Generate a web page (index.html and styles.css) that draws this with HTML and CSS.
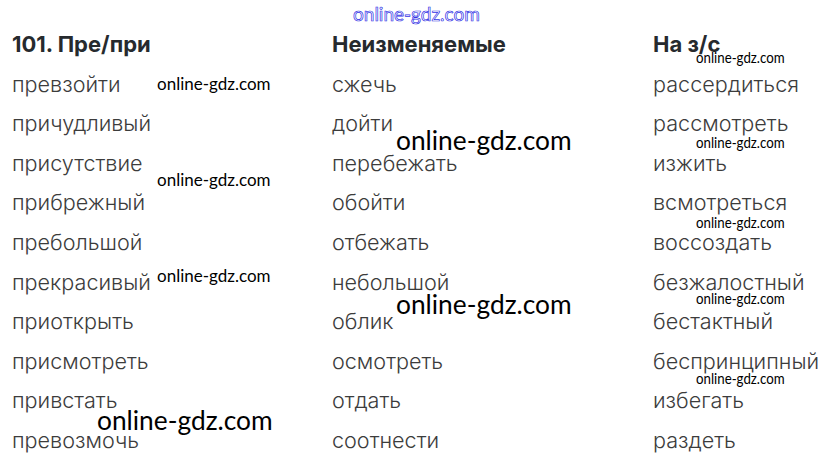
FILE: index.html
```html
<!DOCTYPE html>
<html lang="ru">
<head>
<meta charset="utf-8">
<link rel="stylesheet" href="styles.css">
</head>
<body>
<div class="page">
  <div class="table">
    <div class="col">
      <div class="cell head">101. Пре/при</div>
      <div class="cell">превзойти</div>
      <div class="cell">причудливый</div>
      <div class="cell">присутствие</div>
      <div class="cell">прибрежный</div>
      <div class="cell">пребольшой</div>
      <div class="cell">прекрасивый</div>
      <div class="cell">приоткрыть</div>
      <div class="cell">присмотреть</div>
      <div class="cell">привстать</div>
      <div class="cell">превозмочь</div>
    </div>
    <div class="col">
      <div class="cell head">Неизменяемые</div>
      <div class="cell">сжечь</div>
      <div class="cell">дойти</div>
      <div class="cell">перебежать</div>
      <div class="cell">обойти</div>
      <div class="cell">отбежать</div>
      <div class="cell">небольшой</div>
      <div class="cell">облик</div>
      <div class="cell">осмотреть</div>
      <div class="cell">отдать</div>
      <div class="cell">соотнести</div>
    </div>
    <div class="col">
      <div class="cell head">На з/с</div>
      <div class="cell">рассердиться</div>
      <div class="cell">рассмотреть</div>
      <div class="cell">изжить</div>
      <div class="cell">всмотреться</div>
      <div class="cell">воссоздать</div>
      <div class="cell">безжалостный</div>
      <div class="cell">бестактный</div>
      <div class="cell">беспринципный</div>
      <div class="cell">избегать</div>
      <div class="cell">раздеть</div>
    </div>
  </div>
  <div class="wm wm-top" style="left:353px;top:1px">online-gdz.com</div>
  <div class="wm wm-s" style="left:157px;top:72px">online-gdz.com</div>
  <div class="wm wm-s" style="left:157px;top:168px">online-gdz.com</div>
  <div class="wm wm-s" style="left:157px;top:264px">online-gdz.com</div>
  <div class="wm wm-l" style="left:396px;top:122px">online-gdz.com</div>
  <div class="wm wm-l" style="left:396px;top:286px">online-gdz.com</div>
  <div class="wm wm-l" style="left:97px;top:402px">online-gdz.com</div>
  <div class="wm wm-c" style="left:696px;top:46px">online-gdz.com</div>
  <div class="wm wm-c" style="left:696px;top:131px">online-gdz.com</div>
  <div class="wm wm-c" style="left:696px;top:211px">online-gdz.com</div>
  <div class="wm wm-c" style="left:696px;top:287px">online-gdz.com</div>
  <div class="wm wm-c" style="left:696px;top:367px">online-gdz.com</div>
</div>
</body>
</html>
```
FILE: styles.css
```css
html, body {
  margin: 0;
  padding: 0;
  background: #fff;
}
.page {
  position: relative;
  width: 826px;
  height: 469px;
  overflow: hidden;
}
.table {
  display: grid;
  grid-template-columns: 320px 321px 185px;
  padding: 25px 0 0 12px;
}
.col {
  display: flex;
  flex-direction: column;
}
.cell {
  height: 39.6px;
  line-height: 39.6px;
  font-family: "Inter", "Liberation Sans", sans-serif;
  font-weight: 300;
  font-size: 21.6px;
  color: #3c3c3c;
  white-space: nowrap;
}
.cell.head {
  font-family: "Inter", "Liberation Sans", sans-serif;
  font-weight: 700;
  font-size: 22px;
  color: #262a2e;
}
.wm {
  position: absolute;
  font-family: "Lato", "Open Sans", sans-serif;
  color: #000;
  white-space: nowrap;
  line-height: 1.4;
}
.wm-s { font-size: 17px; }
.wm-l { font-size: 26.3px; }
.wm-c {
  font-size: 16px;
  transform: scaleX(0.83);
  transform-origin: left center;
}
.wm-top {
  font-size: 19px;
  color: #fff;
  -webkit-text-stroke: 0.7px #3434e6;
}
```
